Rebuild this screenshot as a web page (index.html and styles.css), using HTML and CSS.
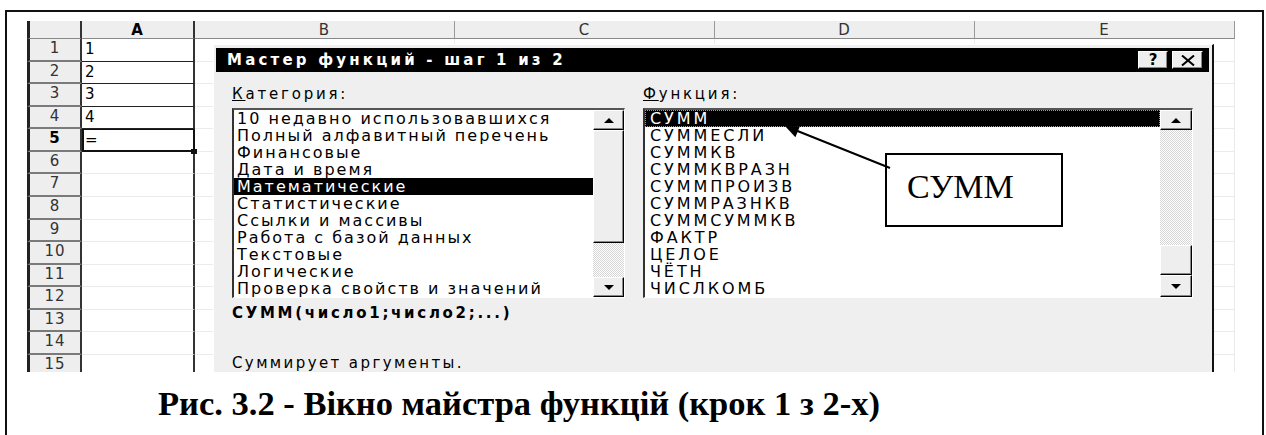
FILE: index.html
```html
<!DOCTYPE html>
<html lang="ru">
<head>
<meta charset="utf-8">
<title>Мастер функций</title>
<link rel="stylesheet" href="styles.css">
</head>
<body>
<div class="frame">
  <div class="viewport">
    <div class="sheet">
      <div class="corner"></div>
      <div class="hd bold">A</div>
      <div class="hd">B</div>
      <div class="hd">C</div>
      <div class="hd">D</div>
      <div class="hd">E</div>

      <div class="rh">1</div><div class="c a filled">1</div><div class="c"></div><div class="c"></div><div class="c"></div><div class="c"></div>
      <div class="rh">2</div><div class="c a filled">2</div><div class="c"></div><div class="c"></div><div class="c"></div><div class="c"></div>
      <div class="rh">3</div><div class="c a filled">3</div><div class="c"></div><div class="c"></div><div class="c"></div><div class="c"></div>
      <div class="rh">4</div><div class="c a filled">4</div><div class="c"></div><div class="c"></div><div class="c"></div><div class="c"></div>
      <div class="rh bold">5</div><div class="c a active">=</div><div class="c"></div><div class="c"></div><div class="c"></div><div class="c"></div>
      <div class="rh">6</div><div class="c a"></div><div class="c"></div><div class="c"></div><div class="c"></div><div class="c"></div>
      <div class="rh">7</div><div class="c a"></div><div class="c"></div><div class="c"></div><div class="c"></div><div class="c"></div>
      <div class="rh">8</div><div class="c a"></div><div class="c"></div><div class="c"></div><div class="c"></div><div class="c"></div>
      <div class="rh">9</div><div class="c a"></div><div class="c"></div><div class="c"></div><div class="c"></div><div class="c"></div>
      <div class="rh">10</div><div class="c a"></div><div class="c"></div><div class="c"></div><div class="c"></div><div class="c"></div>
      <div class="rh">11</div><div class="c a"></div><div class="c"></div><div class="c"></div><div class="c"></div><div class="c"></div>
      <div class="rh">12</div><div class="c a"></div><div class="c"></div><div class="c"></div><div class="c"></div><div class="c"></div>
      <div class="rh">13</div><div class="c a"></div><div class="c"></div><div class="c"></div><div class="c"></div><div class="c"></div>
      <div class="rh">14</div><div class="c a"></div><div class="c"></div><div class="c"></div><div class="c"></div><div class="c"></div>
      <div class="rh">15</div><div class="c a"></div><div class="c"></div><div class="c"></div><div class="c"></div><div class="c"></div>
    </div>

    <div class="dialog">
      <div class="titlebar">
        <span class="title">Мастер функций - шаг 1 из 2</span>
        <span class="tbtn q">?</span>
        <span class="tbtn x">
          <svg width="14" height="11" viewBox="0 0 14 11"><path d="M1 0.5 L13 10.5 M13 0.5 L1 10.5" stroke="#000" stroke-width="2"/></svg>
        </span>
      </div>
      <div class="body">
        <div class="label"><u>К</u>атегория:</div>
        <div class="label"><u>Ф</u>ункция:</div>

        <div class="list cat">
          <ul class="items">
            <li>10 недавно использовавшихся</li>
            <li>Полный алфавитный перечень</li>
            <li>Финансовые</li>
            <li>Дата и время</li>
            <li class="sel">Математические</li>
            <li>Статистические</li>
            <li>Ссылки и массивы</li>
            <li>Работа с базой данных</li>
            <li>Текстовые</li>
            <li>Логические</li>
            <li>Проверка свойств и значений</li>
          </ul>
          <div class="sb">
            <div class="sbtn up"></div>
            <div class="thumb tall"></div>
            <div class="track"></div>
            <div class="sbtn down"></div>
          </div>
        </div>

        <div class="list fn">
          <ul class="items caps">
            <li class="sel focus">СУММ</li>
            <li>СУММЕСЛИ</li>
            <li>СУММКВ</li>
            <li>СУММКВРАЗН</li>
            <li>СУММПРОИЗВ</li>
            <li>СУММРАЗНКВ</li>
            <li>СУММСУММКВ</li>
            <li>ФАКТР</li>
            <li>ЦЕЛОЕ</li>
            <li>ЧЁТН</li>
            <li>ЧИСЛКОМБ</li>
          </ul>
          <div class="sb">
            <div class="sbtn up"></div>
            <div class="track"></div>
            <div class="thumb short"></div>
            <div class="sbtn down low"></div>
          </div>
        </div>

        <div class="syntax">СУММ(число1;число2;...)</div>
        <div class="desc">Суммирует аргументы.</div>
      </div>
    </div>

    <div class="callout">СУММ</div>
    <svg class="pointer" width="1210" height="351" viewBox="0 0 1210 351">
      <line x1="863" y1="147" x2="768" y2="109" stroke="#000" stroke-width="2"/>
      <polygon points="758,105 772.9,105.2 768.4,116.3" fill="#000"/>
    </svg>
  </div>

  <p class="caption">Рис. 3.2 - Вікно майстра функцій (крок 1 з 2-х)</p>
</div>
</body>
</html>
```

FILE: styles.css
```css
* { box-sizing: border-box; }

body {
  margin: 0;
  background: #fff;
  font-family: "DejaVu Sans", "Noto Sans", sans-serif;
  color: #000;
}

/* page frame around the figure */
.frame {
  margin: 10px 2px 0 5px;
  height: 425px;
  border: 2px solid #111;
  border-bottom: 0;
}

.viewport {
  position: relative;
  margin: 9px 0 0 20px;
  width: 1210px;
  height: 351px;
  overflow: hidden;
}

/* worksheet grid */
.sheet {
  display: grid;
  grid-template-columns: 55px 113px 260px 260px 260px 260px;
  grid-template-rows: 18px;
  grid-auto-rows: 22.57px;
  font-size: 15px;
}

.corner {
  background: #eee;
  border-left: 3px solid #222;
  border-right: 2px solid #333;
  border-bottom: 1px solid #888;
}

.hd {
  background: #eee;
  border-right: 1px solid #999;
  border-bottom: 1px solid #888;
  text-align: center;
  line-height: 18px;
  color: #333;
  font-size: 15px;
  letter-spacing: 1px;
}
.hd.bold { color: #000; border-right: 2px solid #333; }

.rh {
  background: #eee;
  border-left: 3px solid #222;
  border-right: 2px solid #333;
  border-bottom: 2px solid #7a7a7a;
  text-align: center;
  line-height: 19px;
  color: #333;
  letter-spacing: 1px;
}
.bold { font-weight: bold; color: #000; }

.c {
  border-right: 1px solid #ebebeb;
  border-bottom: 1px solid #ebebeb;
  padding-left: 3px;
  line-height: 20px;
}
.c.a { border-right: 2px solid #333; }
.c.filled { border-bottom: 1px solid #222; }
.c.active {
  position: relative;
  border: 2px solid #111;
  border-top-width: 1px;
  padding-left: 1px;
}
.c.active::after {
  content: "";
  position: absolute;
  right: -4px;
  bottom: -4px;
  width: 6px;
  height: 5px;
  background: #111;
}

/* dialog window */
.dialog {
  position: absolute;
  left: 186px;
  top: 23px;
  width: 1001px;
  height: 400px;
  background: #efefef;
  border-left: 1px solid #fff;
  border-top: 1px solid #fff;
  border-right: 2px solid #111;
  padding: 3px 3px 0 2px;
}

.titlebar {
  display: flex;
  align-items: center;
  gap: 4px;
  height: 24px;
  background: #000;
  color: #fff;
  padding: 0 6px 0 11px;
}
.title {
  flex: 1;
  font-weight: bold;
  font-size: 15px;
  letter-spacing: 3.2px;
  white-space: nowrap;
}
.tbtn {
  display: flex;
  align-items: center;
  justify-content: center;
  width: 30px;
  height: 18px;
  background: #eee;
  color: #000;
  border: 1px solid;
  border-color: #fff #000 #000 #fff;
  box-shadow: inset -1px -1px #888;
  font-weight: bold;
  font-size: 15px;
}
.tbtn.x { width: 31px; }

.body {
  display: grid;
  grid-template-columns: 393px 550px;
  column-gap: 18px;
  padding: 12px 0 0 16px;
}

.label {
  font-size: 15px;
  line-height: 20px;
  letter-spacing: 2.8px;
  margin-bottom: 4px;
}

.list {
  display: flex;
  height: 190px;
  background: #fff;
  border-top: 2px solid #555;
  border-left: 2px solid #333;
  border-right: 1px solid #fff;
  border-bottom: 1px solid #fff;
}

.items {
  flex: 1;
  margin: 0;
  padding: 0;
  list-style: none;
  overflow: hidden;
}
.items li {
  height: 17px;
  line-height: 17px;
  padding-left: 3px;
  font-size: 16px;
  letter-spacing: 2px;
  white-space: nowrap;
}
.items.caps li { letter-spacing: 2.9px; font-size: 16px; padding-left: 5px; }
.items li.sel { background: #000; color: #fff; }
.items li.focus { outline: 1px dotted #999; outline-offset: -1px; }

/* scroll bars */
.sb {
  display: flex;
  flex-direction: column;
  width: 31px;
}
.list.fn .sb { width: 32px; }

.sbtn, .thumb {
  background: #eee;
  border: 1px solid;
  border-color: #fff #000 #000 #fff;
  box-shadow: inset -1px -1px #888;
}
.sbtn {
  display: flex;
  align-items: center;
  justify-content: center;
  height: 20px;
}
.sbtn.low { height: 22px; }
.sbtn.up::before {
  content: "";
  border-left: 5px solid transparent;
  border-right: 5px solid transparent;
  border-bottom: 5px solid #000;
}
.sbtn.down::before {
  content: "";
  border-left: 5px solid transparent;
  border-right: 5px solid transparent;
  border-top: 5px solid #000;
}
.thumb.tall { height: 113px; }
.thumb.short { height: 30px; }
.track {
  flex: 1;
  background: repeating-conic-gradient(#fff 0 25%, #d6d6d6 0 50%) 0 0 / 2px 2px;
}

.syntax {
  grid-column: 1 / -1;
  margin-top: 5px;
  font-weight: bold;
  font-size: 15px;
  line-height: 20px;
  letter-spacing: 2.7px;
}
.desc {
  grid-column: 1 / -1;
  margin-top: 30px;
  font-size: 15px;
  line-height: 20px;
  letter-spacing: 2.4px;
}

/* annotation box with arrow */
.callout {
  position: absolute;
  left: 858px;
  top: 132px;
  width: 178px;
  height: 74px;
  background: #fff;
  border: 2px solid #000;
  padding: 12px 0 0 20px;
  font-family: "Liberation Serif", "Times New Roman", serif;
  font-size: 34px;
  line-height: 40px;
}
.pointer {
  position: absolute;
  left: 0;
  top: 0;
  pointer-events: none;
}

.caption {
  margin: 11px 0 0 151px;
  font-family: "Liberation Serif", "Times New Roman", serif;
  font-weight: bold;
  font-size: 34.5px;
  line-height: 40px;
  white-space: nowrap;
}
```
